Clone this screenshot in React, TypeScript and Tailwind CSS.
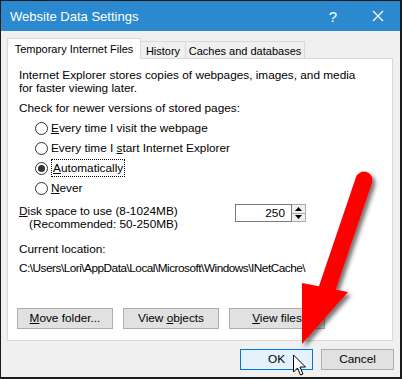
import React from 'react'

const font = { fontFamily: '"Liberation Sans", Arial, sans-serif' }

function Radio({ checked, children }: { checked?: boolean; children: React.ReactNode }) {
  return (
    <div className="flex h-5 items-center">
      <span className="ml-[16px] flex h-[13px] w-[13px] items-center justify-center rounded-full border border-[#333] bg-white">
        {checked && <span className="h-[7px] w-[7px] rounded-full bg-[#333]" />}
      </span>
      <span className="ml-[3px]">{children}</span>
    </div>
  )
}

function Btn({ children, className = '' }: { children: React.ReactNode; className?: string }) {
  return (
    <div className={`flex h-[21px] items-center justify-center border border-[#adadad] bg-[#e1e1e1] ${className}`}>
      {children}
    </div>
  )
}

export default function App() {
  return (
    <div className="relative h-[379px] w-[402px] overflow-hidden whitespace-nowrap border border-r-2 border-b-2 border-[#1b1b1b] text-[11.8px] leading-[13px] text-black" style={font}>
      <div className="flex h-full flex-col bg-[#f0f0f0]">
        {/* Title bar */}
        <div className="flex h-[30px] shrink-0 items-center bg-[#2b8acf] text-white">
          <span className="ml-[9px] text-[13px]">Website Data Settings</span>
          <span className="ml-auto mr-[35px] text-[15px]">?</span>
          <svg width="12" height="12" viewBox="0 0 12 12" className="mr-[16px]">
            <path d="M1 1 L11 11 M11 1 L1 11" stroke="white" strokeWidth="1.2" />
          </svg>
        </div>

        {/* Tabs */}
        <div className="mt-[7px] flex h-[20px] items-end pl-[6px] text-[11px]">
          <div className="relative z-10 -mb-px flex h-[21px] w-[134px] items-start justify-center border border-b-0 border-[#d9d9d9] bg-white pt-[4px]">
            Temporary Internet Files
          </div>
          <div className="flex h-[17px] w-[45px] items-center justify-center border border-b-0 border-l-0 border-[#d9d9d9] pt-[2px]">
            History
          </div>
          <div className="flex h-[17px] w-[119px] items-center justify-center border border-b-0 border-l-0 border-[#d9d9d9] pt-[2px]">
            Caches and databases
          </div>
        </div>

        {/* Panel */}
        <div className="ml-[6px] flex h-[283px] w-[386px] flex-col border border-[#d9d9d9] bg-white pl-[11px] pt-[10px]">
          <p>Internet Explorer stores copies of webpages, images, and media</p>
          <p>for faster viewing later.</p>
          <p className="mt-[7px]">Check for newer versions of stored pages:</p>
          <div className="mt-[3px]">
            <Radio>
              <u>E</u>very time I visit the webpage
            </Radio>
            <Radio>
              Every time I <u>s</u>tart Internet Explorer
            </Radio>
            <Radio checked>
              <span className="border border-dotted border-black px-[1px] py-[1px]">
                <u>A</u>utomatically
              </span>
            </Radio>
            <Radio>
              <u>N</u>ever
            </Radio>
          </div>

          <div className="mt-[7px] flex items-start">
            <div>
              <p>
                <u>D</u>isk space to use (8-1024MB)
              </p>
              <p className="pl-[10px]">(Recommended: 50-250MB)</p>
            </div>
            <div className="ml-auto mr-[86px] -mt-[1px] flex h-[18px]">
              <div className="flex w-[57px] items-center justify-end border border-[#7a7a7a] pr-[6px]">250</div>
              <div className="flex w-[14px] flex-col border border-l-0 border-[#adadad] bg-[#f0f0f0]">
                <div className="flex flex-1 items-center justify-center border-b border-[#adadad]">
                  <svg width="7" height="4" viewBox="0 0 7 4"><path d="M0 4 L3.5 0 L7 4 Z" fill="#000" /></svg>
                </div>
                <div className="flex flex-1 items-center justify-center">
                  <svg width="7" height="4" viewBox="0 0 7 4"><path d="M0 0 L3.5 4 L7 0 Z" fill="#000" /></svg>
                </div>
              </div>
            </div>
          </div>

          <p className="mt-[12px]">Current location:</p>
          <p className="mt-[6px] tracking-[-0.5px]">C:\Users\Lori\AppData\Local\Microsoft\Windows\INetCache\</p>

          <div className="-ml-[2px] mb-[11px] mt-auto flex gap-[10px]">
            <Btn className="w-[96px]">
              <span>
                <u>M</u>ove folder...
              </span>
            </Btn>
            <Btn className="w-[96px]">
              <span>
                View <u>o</u>bjects
              </span>
            </Btn>
            <Btn className="w-[96px]">
              <span>
                <u>V</u>iew files
              </span>
            </Btn>
          </div>
        </div>

        {/* Dialog buttons */}
        <div className="mt-[8px] flex justify-end gap-[8px] pr-[6px]">
          <div className="flex h-[21px] w-[73px] items-center justify-center border border-[#0078d7] bg-[#e5f1fb]">OK</div>
          <Btn className="w-[73px]">Cancel</Btn>
        </div>
      </div>

      {/* Red annotation arrow */}
      <svg className="pointer-events-none absolute left-[-1px] top-[-1px]" width="402" height="379" viewBox="0 0 402 379">
        <defs>
          <filter id="sh" x="-50%" y="-50%" width="200%" height="200%">
            <feDropShadow dx="3" dy="3" stdDeviation="2" floodColor="#000" floodOpacity="0.55" />
          </filter>
        </defs>
        <g filter="url(#sh)">
          <line x1="364" y1="180" x2="327" y2="289" stroke="#ff0000" strokeWidth="17" strokeLinecap="round" />
          <polygon points="302,283 348,292 302,344" fill="#ff0000" />
        </g>
        {/* Mouse cursor */}
        <path
          d="M293.5 355 L293.5 372 L297.5 368 L300.5 375 L303 374 L300 367 L305.5 367 Z"
          fill="#fff"
          stroke="#000"
          strokeWidth="1"
          strokeLinejoin="round"
        />
      </svg>
    </div>
  )
}
